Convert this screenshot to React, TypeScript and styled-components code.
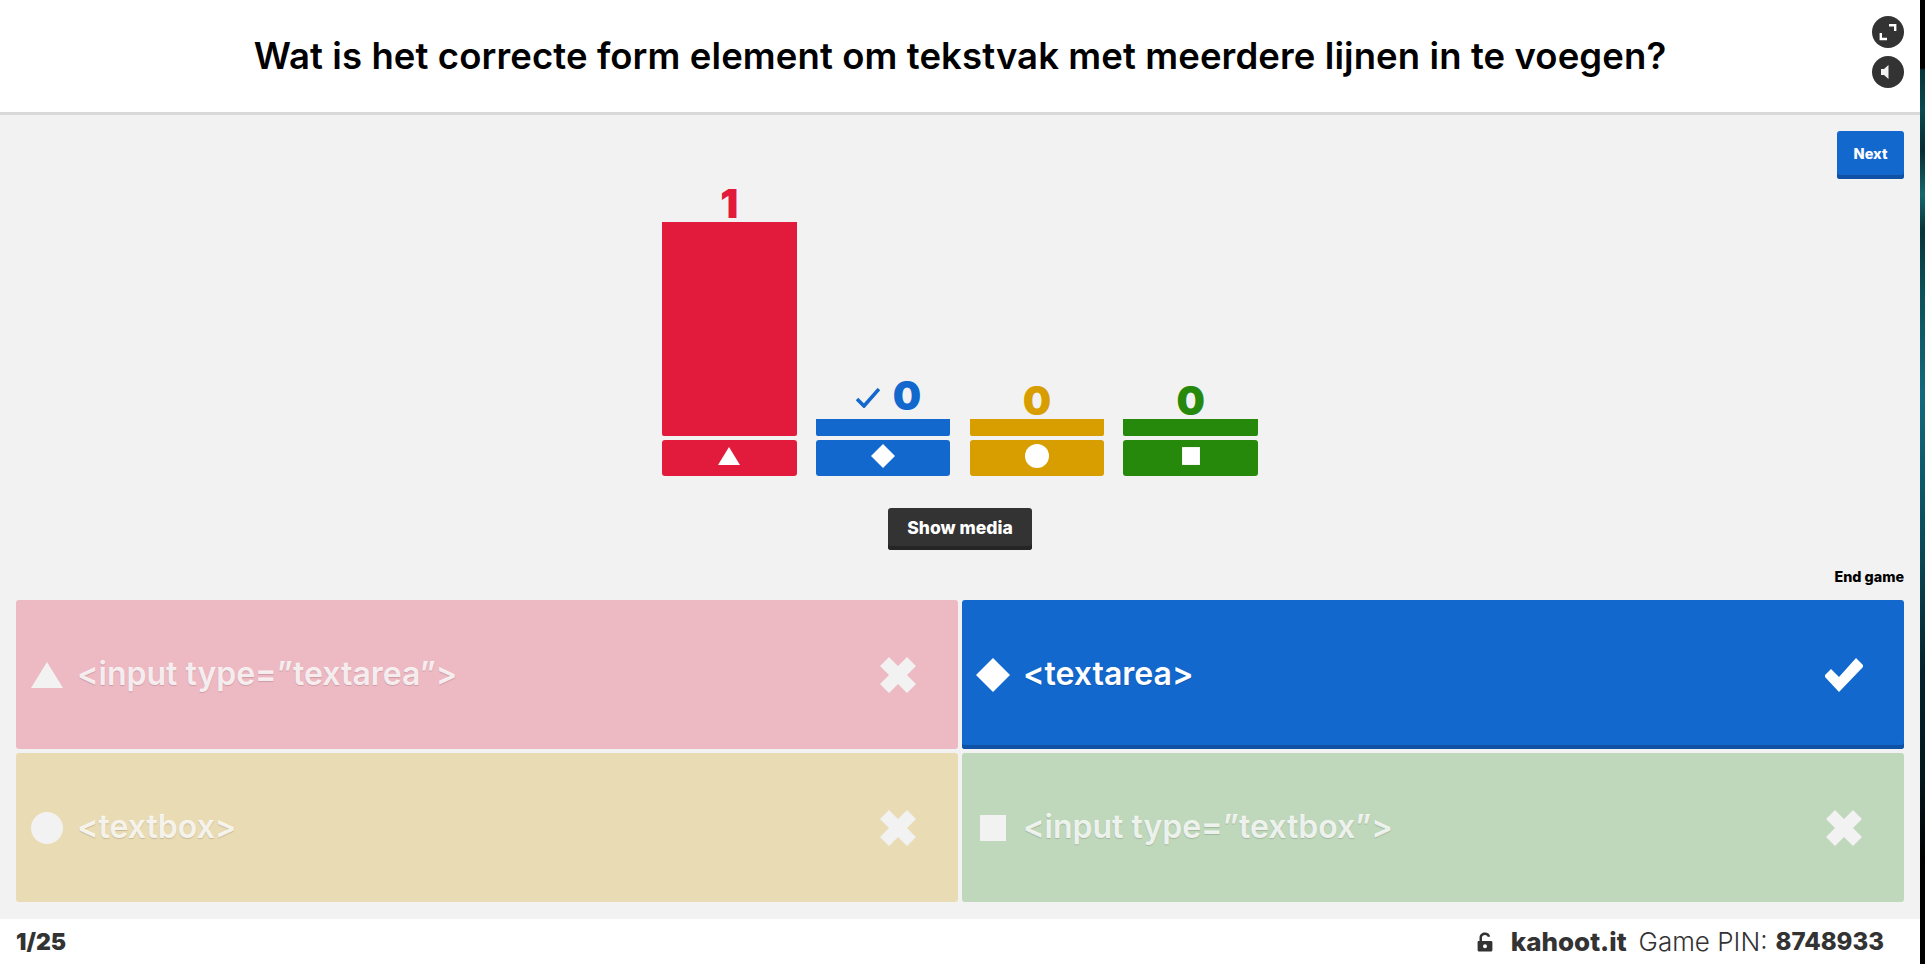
import styled, { createGlobalStyle } from 'styled-components';

const GlobalStyle = createGlobalStyle`
  html, body {
    margin: 0;
    padding: 0;
    height: 100%;
    overflow: hidden;
  }

  body {
    background: linear-gradient(
      to bottom,
      #000 0, #000 68px, #06343a 70px, #0a4a50 110px, #062c32 150px,
      #15686e 195px, #06343a 230px, #0b5058 290px, #126a7c 393px,
      #0c5a6c 470px, #0a4654 560px, #04202a 675px, #03161c 780px,
      #000 860px, #000 964px
    );
    font-family: Inter, "Liberation Sans", sans-serif;
  }

  * {
    box-sizing: border-box;
  }
`;

const answers = [
    {shape: 'triangle', text: '<input type=”textarea”>', correct: false, dim: '#edb9c3'},
    {shape: 'diamond', text: '<textarea>', correct: true, dim: '#1368ce'},
    {shape: 'circle', text: '<textbox>', correct: false, dim: '#e9dbb3'},
    {shape: 'square', text: '<input type=”textbox”>', correct: false, dim: '#bfd7ba'},
];

const results = [
    {shape: 'triangle', color: '#e21b3c', count: 1, height: 214, correct: false},
    {shape: 'diamond', color: '#1368ce', count: 0, height: 17, correct: true},
    {shape: 'circle', color: '#d89e00', count: 0, height: 17, correct: false},
    {shape: 'square', color: '#26890c', count: 0, height: 17, correct: false},
];

function Shape({kind, size}: {kind: string; size: number}) {
    return (
        <svg width={size} height={size} viewBox="0 0 32 32" fill="currentColor">
            {kind === 'triangle' && <polygon points="16,3 32,29 0,29"/>}
            {kind === 'diamond' && <polygon points="16,0 32,16 16,32 0,16"/>}
            {kind === 'circle' && <circle cx="16" cy="16" r="16"/>}
            {kind === 'square' && <rect x="3" y="3" width="26" height="26"/>}
        </svg>
    );
}

function Cross() {
    return (
        <svg width="38" height="38" viewBox="0 0 38 38" fill="currentColor">
            <path d="M1 10 L10 1 L19 10 L28 1 L37 10 L28 19 L37 28 L28 37 L19 28 L10 37 L1 28 L10 19 Z"/>
        </svg>
    );
}

function Tick() {
    return (
        <svg width="38" height="38" viewBox="0 0 38 38" fill="currentColor">
            <path d="M-1 20 L6 13 L14 21 L31 2 L39 10 L14 36 Z"/>
        </svg>
    );
}

function App() {
    return (
        <Page>
            <GlobalStyle/>
            <Header>
                <Question>Wat is het correcte form element om tekstvak met meerdere lijnen in te voegen?</Question>
                <RoundButtons>
                    <RoundButton>
                        <svg width="20" height="20" viewBox="0 0 20 20" fill="none" stroke="#fff" strokeWidth="2.4">
                            <path d="M11 3.2 H17.2 V9"/>
                            <path d="M2.8 11 V17 H9"/>
                        </svg>
                    </RoundButton>
                    <RoundButton>
                        <svg width="20" height="20" viewBox="0 0 20 20" fill="#f2f2f2">
                            <path d="M3 7 H6 L10.5 3 V17 L6 13 H3 Z"/>
                        </svg>
                    </RoundButton>
                </RoundButtons>
            </Header>
            <Main>
                <Stage>
                    <Center>
                        <Chart>
                            {results.map(r => (
                                <Column key={r.shape} $color={r.color}>
                                    <Count $raised={r.correct}>
                                        {r.correct && (
                                            <CountTick width="24" height="20" viewBox="0 0 24 20" fill="none" stroke="currentColor" strokeWidth="3.6">
                                                <path d="M1 11 L8 18 L23 1"/>
                                            </CountTick>
                                        )}
                                        {r.count}
                                    </Count>
                                    <Bar $height={r.height}/>
                                    <BarLabel>
                                        <Shape kind={r.shape} size={r.shape === 'triangle' ? 22 : r.shape === 'square' ? 22 : 24}/>
                                    </BarLabel>
                                </Column>
                            ))}
                        </Chart>
                        <MediaButton>Show media</MediaButton>
                    </Center>
                    <NextButton>Next</NextButton>
                </Stage>
                <EndRow>
                    <EndGame>End game</EndGame>
                </EndRow>
                <Answers>
                    {answers.map(a => (
                        <Answer key={a.shape} $color={a.dim} $correct={a.correct}>
                            <AnswerShape $correct={a.correct}>
                                <Shape kind={a.shape} size={a.shape === 'diamond' ? 34 : 32}/>
                            </AnswerShape>
                            <AnswerText $correct={a.correct}>{a.text}</AnswerText>
                            <Verdict $correct={a.correct}>
                                {a.correct ? <Tick/> : <Cross/>}
                            </Verdict>
                        </Answer>
                    ))}
                </Answers>
            </Main>
            <Footer>
                <Progress>1/25</Progress>
                <PinInfo>
                    <svg width="16" height="20" viewBox="0 0 16 20" fill="#333">
                        <path d="M1 9 H2.5 V5.5 C2.5 2.5 5 .5 8 .5 C10.6 .5 12.6 2 13.2 4.4 L10.8 5 C10.4 3.8 9.4 3 8 3 C6.3 3 5 4 5 5.5 V9 H14 C14.8 9 15.4 9.6 15.4 10.4 V18 C15.4 18.9 14.8 19.5 14 19.5 H2 C1.2 19.5 .6 18.9 .6 18 V10 Z M8 12.2 A2 2 0 1 0 8 16.2 A2 2 0 1 0 8 12.2 Z" fillRule="evenodd"/>
                    </svg>
                    <Site>kahoot.it</Site>
                    <PinLabel>Game PIN:</PinLabel>
                    <Pin>8748933</Pin>
                </PinInfo>
            </Footer>
        </Page>
    );
}

export default App;

const Page = styled.div`
  width: 1920px;
  height: 964px;
  display: flex;
  flex-direction: column;
  background: #f2f2f2;
`;

const Header = styled.header`
  position: relative;
  height: 115px;
  flex: none;
  display: flex;
  align-items: center;
  justify-content: center;
  background: #fff;
  border-bottom: 3px solid #d9d9d9;
`;

const Question = styled.h1`
  margin: 0;
  font-size: 36.5px;
  font-weight: 600;
  color: #000;
  letter-spacing: 0.1px;
`;

const RoundButtons = styled.div`
  position: absolute;
  top: 16px;
  right: 16px;
  display: flex;
  flex-direction: column;
  gap: 8px;
`;

const RoundButton = styled.div`
  width: 32px;
  height: 32px;
  border-radius: 50%;
  background: #333;
  display: flex;
  align-items: center;
  justify-content: center;
`;

const Main = styled.main`
  flex: 1;
  display: flex;
  flex-direction: column;
  padding: 16px 16px 17px;
`;

const Stage = styled.div`
  flex: 1;
  display: grid;
  grid-template-columns: 1fr 596px 1fr;
  align-items: start;
`;

const Center = styled.div`
  grid-column: 2;
  display: flex;
  flex-direction: column;
  align-items: center;
`;

const Chart = styled.div`
  width: 100%;
  height: 345px;
  display: flex;
  justify-content: space-between;
  align-items: flex-end;
`;

const Column = styled.div<{$color: string}>`
  width: 134.5px;
  display: flex;
  flex-direction: column;
  color: ${p => p.$color};
`;

const Count = styled.div<{$raised: boolean}>`
  height: 40px;
  margin-bottom: ${p => (p.$raised ? '3px' : '-2px')};
  display: flex;
  align-items: center;
  justify-content: center;
  gap: 13px;
  font-size: 40px;
  line-height: 40px;
  font-weight: 900;
`;

const CountTick = styled.svg`
  margin-left: 11px;
  margin-top: 4px;
`;

const Bar = styled.div<{$height: number}>`
  height: ${p => p.$height}px;
  background: currentColor;
  border-radius: 0 0 2px 2px;
`;

const BarLabel = styled.div`
  height: 36px;
  margin-top: 4px;
  padding-bottom: 4px;
  display: flex;
  align-items: center;
  justify-content: center;
  background: currentColor;
  border-radius: 3px;

  svg {
    color: #fff;
  }
`;

const MediaButton = styled.button`
  width: 144px;
  height: 42px;
  margin-top: 32px;
  padding: 0 0 4px;
  border: 0;
  border-radius: 3px;
  background: #333;
  box-shadow: inset 0 -4px 0 #252525;
  color: #fff;
  font-family: inherit;
  font-size: 17.5px;
  font-weight: 800;
`;

const NextButton = styled.button`
  justify-self: end;
  width: 67px;
  height: 48px;
  padding: 0 0 4px;
  border: 0;
  border-radius: 3px;
  background: #1368ce;
  box-shadow: inset 0 -4px 0 #0f52a5;
  color: #fff;
  font-family: inherit;
  font-size: 14.5px;
  font-weight: 800;
`;

const EndRow = styled.div`
  display: flex;
  justify-content: flex-end;
  margin-bottom: 15px;
`;

const EndGame = styled.span`
  font-size: 14.3px;
  line-height: 16px;
  font-weight: 800;
  color: #000;
`;

const Answers = styled.div`
  display: grid;
  grid-template-columns: 1fr 1fr;
  grid-template-rows: 149px 149px;
  gap: 4px;
`;

const Answer = styled.div<{$color: string; $correct: boolean}>`
  display: flex;
  align-items: center;
  padding-right: 41px;
  border-radius: 3px;
  background: ${p => p.$color};
  box-shadow: ${p => (p.$correct ? 'inset 0 -4px 0 #0f52a5' : 'none')};
`;

const AnswerShape = styled.div<{$correct: boolean}>`
  width: 62px;
  flex: none;
  display: flex;
  justify-content: center;
  color: ${p => (p.$correct ? '#fff' : '#f2f2f2')};
`;

const AnswerText = styled.span<{$correct: boolean}>`
  flex: 1;
  margin-left: -1px;
  padding-bottom: 2px;
  font-size: 32px;
  font-weight: 600;
  color: ${p => (p.$correct ? '#fff' : 'rgba(255, 255, 255, 0.82)')};
  text-shadow: 0 1px 1px rgba(0, 0, 0, 0.15);
`;

const Verdict = styled.div<{$correct: boolean}>`
  display: flex;
  color: ${p => (p.$correct ? '#fff' : '#f2f2f2')};
`;

const Footer = styled.footer`
  height: 45px;
  flex: none;
  display: flex;
  align-items: center;
  justify-content: space-between;
  padding: 0 36px 0 16px;
  background: #fff;
  color: #333;
`;

const Progress = styled.span`
  font-size: 23px;
  font-weight: 900;
`;

const PinInfo = styled.div`
  display: flex;
  align-items: center;
  font-size: 24px;
`;

const Site = styled.span`
  margin-left: 18px;
  font-size: 26px;
  font-weight: 800;
`;

const PinLabel = styled.span`
  margin-left: 12px;
  font-size: 26px;
  font-weight: 300;
`;

const Pin = styled.span`
  margin-left: 8px;
  font-weight: 800;
`;
